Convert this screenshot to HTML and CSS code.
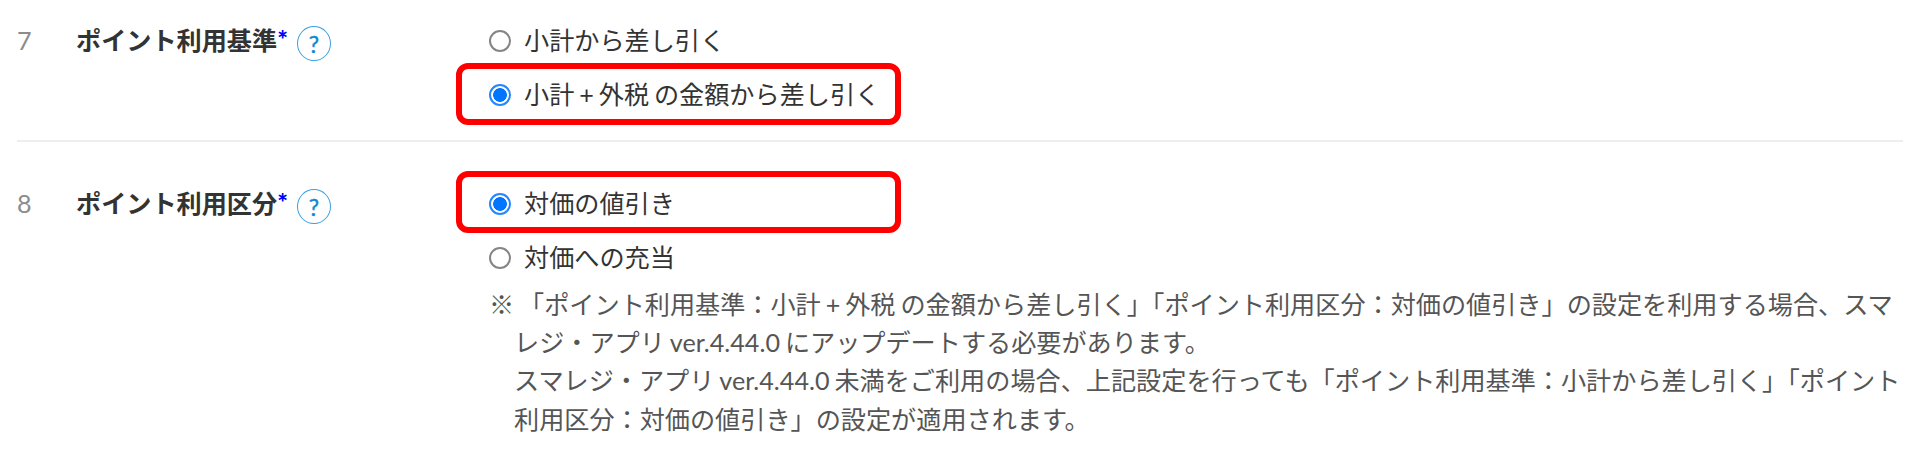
FILE: index.html
```
<!DOCTYPE html>
<html lang="ja">

<head>
    <meta charset="UTF-8">
    <meta name="viewport" content="width=device-width, initial-scale=1.0">
    <title>ポイント設定</title>
    <link rel="stylesheet" href="styles.css">
</head>

<body>

    <form class="settings">
        <div class="row">
            <div class="number">7</div>
            <div class="title">
                <span class="name">ポイント利用基準</span><span class="required">*</span>
                <span class="help">?</span>
            </div>
            <div class="options">
                <label class="option">
                    <input type="radio" name="kijun">
                    <span class="text">小計から差し引く</span>
                </label>
                <label class="option marked">
                    <input type="radio" name="kijun" checked>
                    <span class="text">小計 + 外税 の金額から差し引く</span>
                </label>
            </div>
        </div>

        <div class="row">
            <div class="number">8</div>
            <div class="title">
                <span class="name">ポイント利用区分</span><span class="required">*</span>
                <span class="help">?</span>
            </div>
            <div class="options">
                <label class="option marked">
                    <input type="radio" name="kubun" checked>
                    <span class="text">対価の値引き</span>
                </label>
                <label class="option">
                    <input type="radio" name="kubun">
                    <span class="text">対価への充当</span>
                </label>
                <p class="note">※ 「ポイント利用基準：小計 + 外税 の金額から差し引く」「ポイント利用区分：対価の値引き」の設定を利用する場合、スマ<br>レジ・アプリ ver.4.44.0 にアップデートする必要があります。<br>スマレジ・アプリ ver.4.44.0 未満をご利用の場合、上記設定を行っても「ポイント利用基準：小計から差し引く」「ポイント<br>利用区分：対価の値引き」の設定が適用されます。</p>
            </div>
        </div>
    </form>

</body>

</html>
```

FILE: styles.css
```
body {
    font-family: Lato, "Noto Sans CJK JP", sans-serif;
    font-size: 25.15px;
    word-spacing: -1.5px;
    color: #333;
    background-color: #fff;
    margin: 0;
    overflow: hidden;
}

.settings {
    padding: 0 7px 0 17px;
}

.row {
    display: grid;
    grid-template-columns: 59px 413px 1fr;
    height: 140px;
    border-bottom: 2px solid #eee;
}

.row:last-child {
    height: 310px;
    border-bottom: none;
}

.row + .row {
    padding-top: 21px;
}

.number {
    padding-top: 13px;
    line-height: 54px;
    color: #8c8c8c;
}

.title {
    display: flex;
    align-items: center;
    height: 54px;
    padding-top: 14px;
    font-weight: bold;
}

.name,
.required {
    padding-bottom: 4px;
}

.required {
    color: #00f;
    font-weight: 900;
}

.help {
    display: flex;
    align-items: center;
    justify-content: center;
    box-sizing: border-box;
    width: 34px;
    height: 35px;
    margin: 5px 0 0 9px;
    border: 1px solid #3a9fdf;
    border-radius: 50%;
    color: #0e86d4;
    font-size: 23px;
    font-weight: normal;
    -webkit-text-stroke: 0.4px #0e86d4;
}

.options {
    padding-top: 14px;
}

.option {
    position: relative;
    display: flex;
    align-items: center;
    height: 54px;
    white-space: nowrap;
}

.option input {
    appearance: none;
    box-sizing: border-box;
    width: 22px;
    height: 22px;
    margin: 0 13px 0 0;
    border: 2px solid #858585;
    border-radius: 50%;
}

.option input:checked {
    border: 2px solid #2386ff;
    background: radial-gradient(circle, #0075ff 6.5px, #fff 7.2px);
}

.text {
    padding-bottom: 4px;
}

/* red frame around the recommended choice */
.marked::before {
    content: "";
    position: absolute;
    left: -33px;
    top: -5px;
    box-sizing: border-box;
    width: 445px;
    height: 62px;
    border: 6px solid #f00;
    border-radius: 12px;
}

.row + .row .marked::before {
    top: -6px;
}

.note {
    margin: 0;
    padding-left: 25px;
    text-indent: -25px;
    line-height: 38.2px;
    color: #555;
    white-space: nowrap;
}
```
